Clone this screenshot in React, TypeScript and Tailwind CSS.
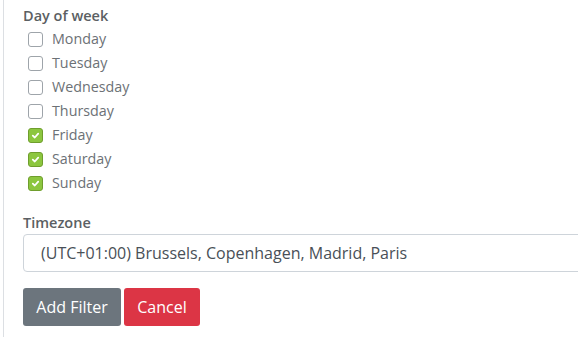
import React from "react";

const days = [
  { name: "Monday", checked: false },
  { name: "Tuesday", checked: false },
  { name: "Wednesday", checked: false },
  { name: "Thursday", checked: false },
  { name: "Friday", checked: true },
  { name: "Saturday", checked: true },
  { name: "Sunday", checked: true },
];

const Box = ({ checked }: { checked: boolean }) =>
  checked ? (
    <span className="flex h-[15px] w-[15px] items-center justify-center rounded-[3px] border border-[#6f9e2d] bg-[#8cc63f]">
      <svg width="9" height="9" viewBox="0 0 10 10">
        <path d="M2 5.2 L4.2 7.2 L8 3" fill="none" stroke="#fff" strokeWidth="2" strokeLinecap="round" strokeLinejoin="round" />
      </svg>
    </span>
  ) : (
    <span className="h-[15px] w-[15px] rounded-[3px] border border-[#9ea4aa] bg-white" />
  );

export default function App() {
  return (
    <div className="h-[337px] w-[578px] overflow-hidden bg-white" style={{ fontFamily: '"Open Sans", sans-serif' }}>
      <div className="ml-[3px] h-full border-l border-[#dcdfe3] pl-[19px] pt-[6px]">
        <div className="text-[14.5px] font-semibold leading-[20px] text-[#5b5f63]">Day of week</div>
        <div className="ml-[5px] mt-[1px] flex flex-col">
          {days.map((d) => (
            <label key={d.name} className="flex h-[24px] items-center gap-[9px]">
              <Box checked={d.checked} />
              <span className="text-[14.3px] text-[#6c7176]">{d.name}</span>
            </label>
          ))}
        </div>
        <div className="mt-[18px] text-[14.5px] font-semibold leading-[20px] text-[#5b5f63]">Timezone</div>
        <div className="mt-[1px] flex h-[38px] w-[560px] items-center rounded-[4px] border border-[#ced4da] pl-[17px] text-[16px] text-[#495057]">
          (UTC+01:00) Brussels, Copenhagen, Madrid, Paris
        </div>
        <div className="mt-[16px] flex gap-[3px]">
          <button className="h-[38px] w-[98px] rounded-[3px] bg-[#6c757d] text-[16px] text-white">Add Filter</button>
          <button className="h-[38px] w-[76px] rounded-[3px] bg-[#dc3545] text-[16px] text-white">Cancel</button>
        </div>
      </div>
    </div>
  );
}
